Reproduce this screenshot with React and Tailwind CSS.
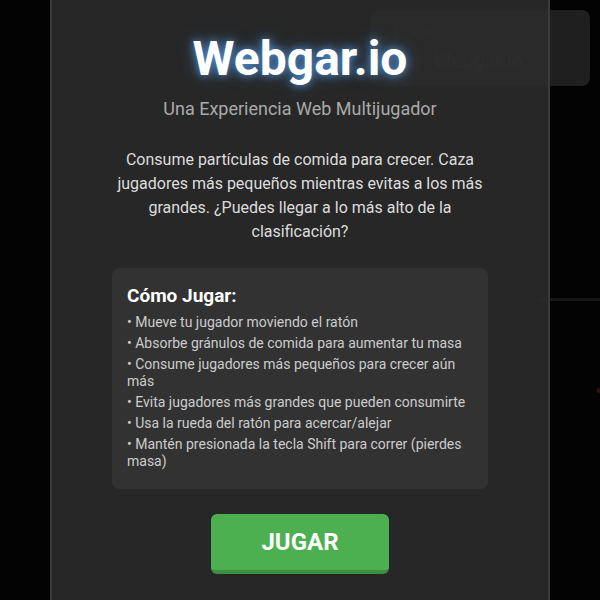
import React from 'react'

const tips = [
  'Mueve tu jugador moviendo el ratón',
  'Absorbe gránulos de comida para aumentar tu masa',
  'Consume jugadores más pequeños para crecer aún más',
  'Evita jugadores más grandes que pueden consumirte',
  'Usa la rueda del ratón para acercar/alejar',
  'Mantén presionada la tecla Shift para correr (pierdes masa)',
]

const App = () => {
  return (
    <div className="relative w-full h-[600px] bg-[#030303] overflow-hidden flex justify-center font-['Roboto',sans-serif]">
      {/* game canvas bits behind the menu */}
      <div className="absolute right-0 top-[298px] w-[60px] h-[3px] bg-[#161616]" />
      <div className="absolute right-0 top-[388px] w-[3px] h-[5px] rounded-full bg-[#3a1010]" />

      {/* Leaderboard */}
      <div className="absolute top-[10px] right-[10px] w-[220px] h-[76px] rounded-lg bg-[#1f1f1f] px-6 pt-3">
        <div className="text-[13px] text-white/10">Líderes</div>
        <div className="mt-1 ml-10 text-[20px] font-bold text-white/10">Webgar.io</div>
      </div>

      {/* Start menu */}
      <div className="relative z-10 w-[500px] h-full bg-[#2b2b2b]/90 border-x-[2px] border-[#3a3a3a] flex flex-col items-center pt-[30px]">
        <h1 className="text-[48px] leading-[58px] font-bold text-white [text-shadow:0_0_8px_rgba(90,170,255,0.8),0_0_18px_rgba(90,170,255,0.4)]">
          Webgar.io
        </h1>
        <p className="mt-[7px] text-[18px] leading-[27px] text-[#aaaaaa]">
          Una Experiencia Web Multijugador
        </p>
        <p className="mt-[26px] w-[380px] text-center text-[16px] leading-[24px] text-[#dddddd]">
          Consume partículas de comida para crecer. Caza jugadores más pequeños mientras evitas a los más grandes. ¿Puedes llegar a lo más alto de la clasificación?
        </p>

        <div className="mt-[24px] w-[376px] rounded-lg bg-[#363636]/80 px-[15px] pt-[16px] pb-[15px]">
          <h3 className="text-[19px] leading-[24px] font-bold text-white">Cómo Jugar:</h3>
          <ul className="mt-[6px]">
            {tips.map((t) => (
              <li key={t} className="mb-1 text-[14px] leading-[17px] text-[#cccccc]">
                • {t}
              </li>
            ))}
          </ul>
        </div>

        <button className="mt-[25px] px-[50px] pt-[14px] pb-[14px] rounded-md bg-[#4caf50] border-b-4 border-[#3b8f3e] text-[24px] leading-[28px] font-bold text-white">
          JUGAR
        </button>
      </div>
    </div>
  )
}

export default App
